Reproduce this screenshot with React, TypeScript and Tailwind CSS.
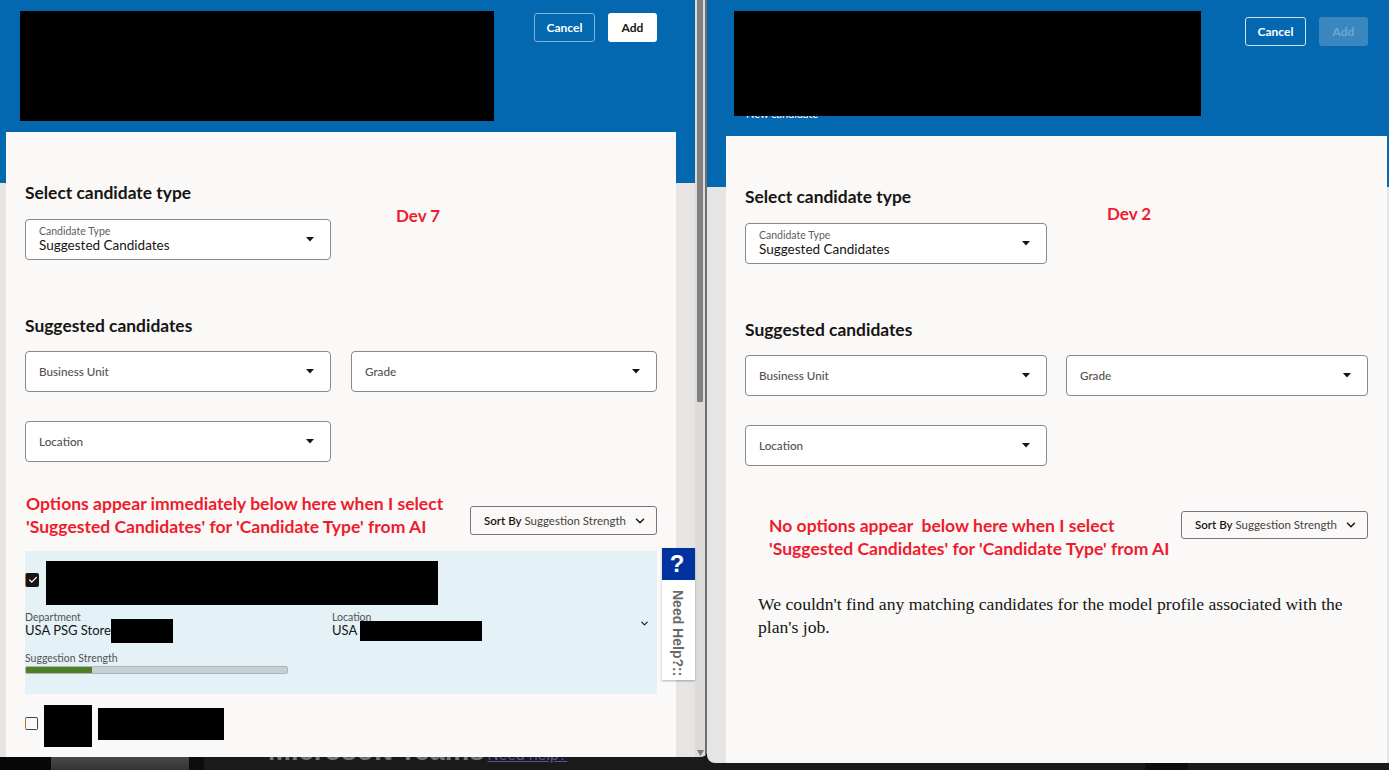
import { Check, ChevronDown } from "lucide-react";

const oracle = "font-['Lato','Noto_Sans',sans-serif]";

function Arrow() {
  return (
    <svg width="8" height="5" viewBox="0 0 8 5" className="shrink-0">
      <polygon points="0,0 8,0 4,4.5" fill="#161513" />
    </svg>
  );
}

function Select({ label, value }: { label: string; value?: string }) {
  return (
    <div className="flex h-[41px] items-center justify-between rounded-[4px] border border-[#8b8987] bg-white pl-[13px] pr-[16px]">
      {value ? (
        <div className="flex flex-col">
          <span className="text-[10.5px] leading-[11px] text-[#5f5d5a]">{label}</span>
          <span className="text-[13.5px] leading-[17px] text-[#161513]">{value}</span>
        </div>
      ) : (
        <span className="text-[11.7px] font-medium text-[#55524f]">{label}</span>
      )}
      <Arrow />
    </div>
  );
}

function Heading({ children }: { children: string }) {
  return <h2 className="h-[24px] text-[17.4px] font-bold leading-[24px] text-[#161513]">{children}</h2>;
}

function SortBy({ className }: { className: string }) {
  return (
    <div className={`flex items-center justify-between rounded-[3px] border border-[#77757a] bg-[#fbf9f8] pl-[13px] pr-[9px] text-[11.5px] text-[#161513] ${className}`}>
      <span>
        <span className="font-semibold">Sort By</span> <span className="text-[#45433f]">Suggestion Strength</span>
      </span>
      <ChevronDown size={14} strokeWidth={2.5} />
    </div>
  );
}

function RedNote({ lines, className }: { lines: string[]; className?: string }) {
  return (
    <div className={`whitespace-pre text-[17.55px] font-bold leading-[23px] text-[#ee1c2e] ${className ?? ""}`}>
      {lines.map((line) => (
        <div key={line}>{line}</div>
      ))}
    </div>
  );
}

function Redact({ className }: { className: string }) {
  return <div className={`shrink-0 bg-black ${className}`} />;
}

function LeftWindow() {
  return (
    <div className={`flex h-[757px] w-[707px] shrink-0 overflow-hidden rounded-br-md ${oracle}`}>
      <div className="relative flex w-[695px] shrink-0 flex-col bg-[linear-gradient(#0368b0_183px,#e6e5e3_183px)]">
        {/* header */}
        <div className="flex h-[132px] shrink-0 items-start justify-between pl-[20px] pr-[38px] pt-[11px]">
          <Redact className="h-[110px] w-[474px]" />
          <div className="mt-[2px] flex gap-[13px] text-[12px] font-bold">
            <button className="h-[29px] w-[61px] rounded-[3px] border border-[#7fb3d8] text-white">Cancel</button>
            <button className="h-[29px] w-[49px] rounded-[3px] bg-white text-[#161513]">Add</button>
          </div>
        </div>

        {/* sheet */}
        <div className="ml-[6px] w-[670px] flex-1 overflow-hidden bg-[#faf9f7] pl-[19px] pr-[19px] pt-[49px]">
          <div className="flex items-start">
            <div className="w-[306px]">
              <Heading>Select candidate type</Heading>
              <div className="mt-[14px]">
                <Select label="Candidate Type" value="Suggested Candidates" />
              </div>
            </div>
            <div className="ml-[65px] mt-[24px] text-[17px] font-bold leading-[22px] text-[#ee1c2e]">Dev 7</div>
          </div>

          <div className="mt-[54px]">
            <Heading>Suggested candidates</Heading>
          </div>
          <div className="mt-[13px] grid grid-cols-2 gap-x-[20px] gap-y-[29px]">
            <Select label="Business Unit" />
            <Select label="Grade" />
            <Select label="Location" />
          </div>

          <div className="mt-[30px] flex items-start justify-between">
            <RedNote
              className="ml-[1px]"
              lines={[
                "Options appear immediately below here when I select",
                "'Suggested Candidates' for 'Candidate Type' from AI",
              ]}
            />
            <SortBy className="mt-[14px] h-[29px] w-[187px]" />
          </div>

          {/* selected candidate */}
          <div className="mt-[13px] h-[143px] bg-[#e4f1f7] pt-[10px]">
            <div className="flex items-start gap-[7px]">
              <div className="mt-[12px] flex h-[14px] w-[14px] items-center justify-center rounded-[2px] border-l border-[#b5722e] bg-[#161513] text-white">
                <Check size={10} strokeWidth={3} />
              </div>
              <Redact className="h-[44px] w-[392px]" />
            </div>
            <div className="mt-[6px] flex items-start text-[#161513]">
              <div className="w-[307px]">
                <div className="h-[8px] text-[10.5px] leading-[12px] text-[#55524f]">Department</div>
                <div className="flex h-[24px] items-center text-[13px]">
                  USA PSG Store
                  <Redact className="h-[24px] w-[62px]" />
                </div>
              </div>
              <div className="flex-1">
                <div className="h-[8px] text-[10.5px] leading-[12px] text-[#55524f]">Location</div>
                <div className="flex h-[24px] items-center text-[13px]">
                  USA
                  <Redact className="ml-[3px] h-[20px] w-[122px]" />
                </div>
              </div>
              <ChevronDown size={11} strokeWidth={2.5} className="mr-[7px] mt-[7px]" />
            </div>
            <div className="mt-[9px] h-[12px] text-[10.5px] leading-[12px] text-[#55524f]">Suggestion Strength</div>
            <div className="mt-[2px] h-[8px] w-[263px] overflow-hidden rounded-[2px] border border-[#aab6b9] bg-[#c6d0d2]">
              <div className="h-full w-[66px] bg-[#4d7f24]" />
            </div>
          </div>

          {/* next candidate */}
          <div className="mt-[11px] flex items-start">
            <div className="mt-[12px] h-[13px] w-[13px] rounded-[2px] border border-[#2e4a66] border-l-[#b5722e] bg-[#fbf9f8]" />
            <Redact className="ml-[6px] h-[42px] w-[48px]" />
            <Redact className="ml-[6px] mt-[3px] h-[32px] w-[126px]" />
          </div>
        </div>

        {/* help tab */}
        <div className="absolute left-[662px] top-[548px] flex h-[132px] w-[33px] flex-col bg-white shadow-[0_1px_2px_rgba(0,0,0,0.3)]">
          <div className="flex h-[32px] items-center justify-center bg-[#0033a0] pr-[3px] font-['Liberation_Sans',sans-serif] text-[24px] font-bold text-white">?</div>
          <div className="flex flex-1 justify-center pr-[7px] pt-[7px] font-['Liberation_Sans',sans-serif] text-[14px] font-bold text-[#6a6a6a] [writing-mode:vertical-rl]">
            Need Help?::
          </div>
        </div>
      </div>

      {/* scrollbar */}
      <div className="flex w-[12px] shrink-0 border-r-2 border-[#6e6e6e] bg-[#dcdbd9]">
        <div className="flex w-[10px] flex-col pl-[2px]">
          <div className="h-[402px] w-[6px] rounded-b-[1px] bg-[#808080]" />
          <div className="flex flex-1 items-end pb-[1px]">
            <svg width="7" height="6" viewBox="0 0 7 6">
              <polygon points="0,0 7,0 3.5,6" fill="#7a7a7a" />
            </svg>
          </div>
        </div>
      </div>
    </div>
  );
}

function RightWindow() {
  return (
    <div className={`flex h-[763px] w-[682px] shrink-0 flex-col overflow-hidden rounded-bl-lg bg-[linear-gradient(#0368b0_187px,#e6e5e3_187px)] ${oracle}`}>
      <div className="flex h-[136px] shrink-0 items-start justify-between pl-[27px] pr-[21px] pt-[11px]">
        <div className="relative h-[107px] w-[467px] overflow-hidden">
          <div className="pl-[12px] pt-[96px] text-[11px] leading-[14px] text-white">New candidate</div>
          <Redact className="absolute left-0 top-0 h-[105px] w-[467px]" />
        </div>
        <div className="mt-[6px] flex gap-[13px] text-[12px] font-bold">
          <button className="h-[29px] w-[61px] rounded-[3px] border border-[#cfe3f1] text-white">Cancel</button>
          <button className="h-[29px] w-[49px] rounded-[3px] bg-[#3a87c0] text-[#6fa8d2]">Add</button>
        </div>
      </div>

      <div className="ml-[19px] w-[661px] flex-1 overflow-hidden bg-[#faf9f7] pl-[19px] pr-[19px] pt-[49px]">
        <div className="flex items-start">
          <div className="w-[302px]">
            <Heading>Select candidate type</Heading>
            <div className="mt-[14px]">
              <Select label="Candidate Type" value="Suggested Candidates" />
            </div>
          </div>
          <div className="ml-[60px] mt-[18px] text-[17px] font-bold leading-[22px] text-[#ee1c2e]">Dev 2</div>
        </div>

        <div className="mt-[54px]">
          <Heading>Suggested candidates</Heading>
        </div>
        <div className="mt-[13px] grid grid-cols-2 gap-x-[19px] gap-y-[29px]">
          <Select label="Business Unit" />
          <Select label="Grade" />
          <Select label="Location" />
        </div>

        <div className="mt-[45px] flex items-start justify-between">
          <RedNote
            className="ml-[24px] mt-[3px]"
            lines={[
              "No options appear  below here when I select",
              "'Suggested Candidates' for 'Candidate Type' from AI",
            ]}
          />
          <SortBy className="h-[28px] w-[187px]" />
        </div>

        <p className="ml-[13px] mt-[33px] w-[600px] font-['Liberation_Serif',serif] text-[17.65px] leading-[23px] text-[#161513]">
          We couldn't find any matching candidates for the model profile associated with the plan's job.
        </p>
      </div>
    </div>
  );
}

export default function App() {
  return (
    <div className="flex h-[770px] w-[1389px] overflow-hidden bg-[#1a1a1a]">
      <div className="flex w-[707px] shrink-0 flex-col">
        <LeftWindow />
        {/* whatever is behind the windows */}
        <div className="flex h-[13px] overflow-hidden font-['Liberation_Sans',sans-serif]">
          <div className="w-[51px] bg-[#080808]" />
          <div className="w-[138px] bg-[linear-gradient(#4a4a4a,#333333)]" />
          <div className="w-[15px] bg-[#0c0c0c]" />
          <div className="-mt-[24px] ml-[64px] flex items-baseline gap-[3px] whitespace-nowrap">
            <span className="text-[27.5px] font-bold leading-[36px] text-[#777777]">Microsoft Teams</span>
            <span className="text-[15.6px] text-[#56559b] underline">Need help?</span>
          </div>
        </div>
      </div>
      <div className="flex w-[682px] shrink-0 flex-col">
        <RightWindow />
        <div className="flex h-[7px]">
          <div className="ml-[438px] w-[43px] bg-[#0e0e0e]" />
        </div>
      </div>
    </div>
  );
}
